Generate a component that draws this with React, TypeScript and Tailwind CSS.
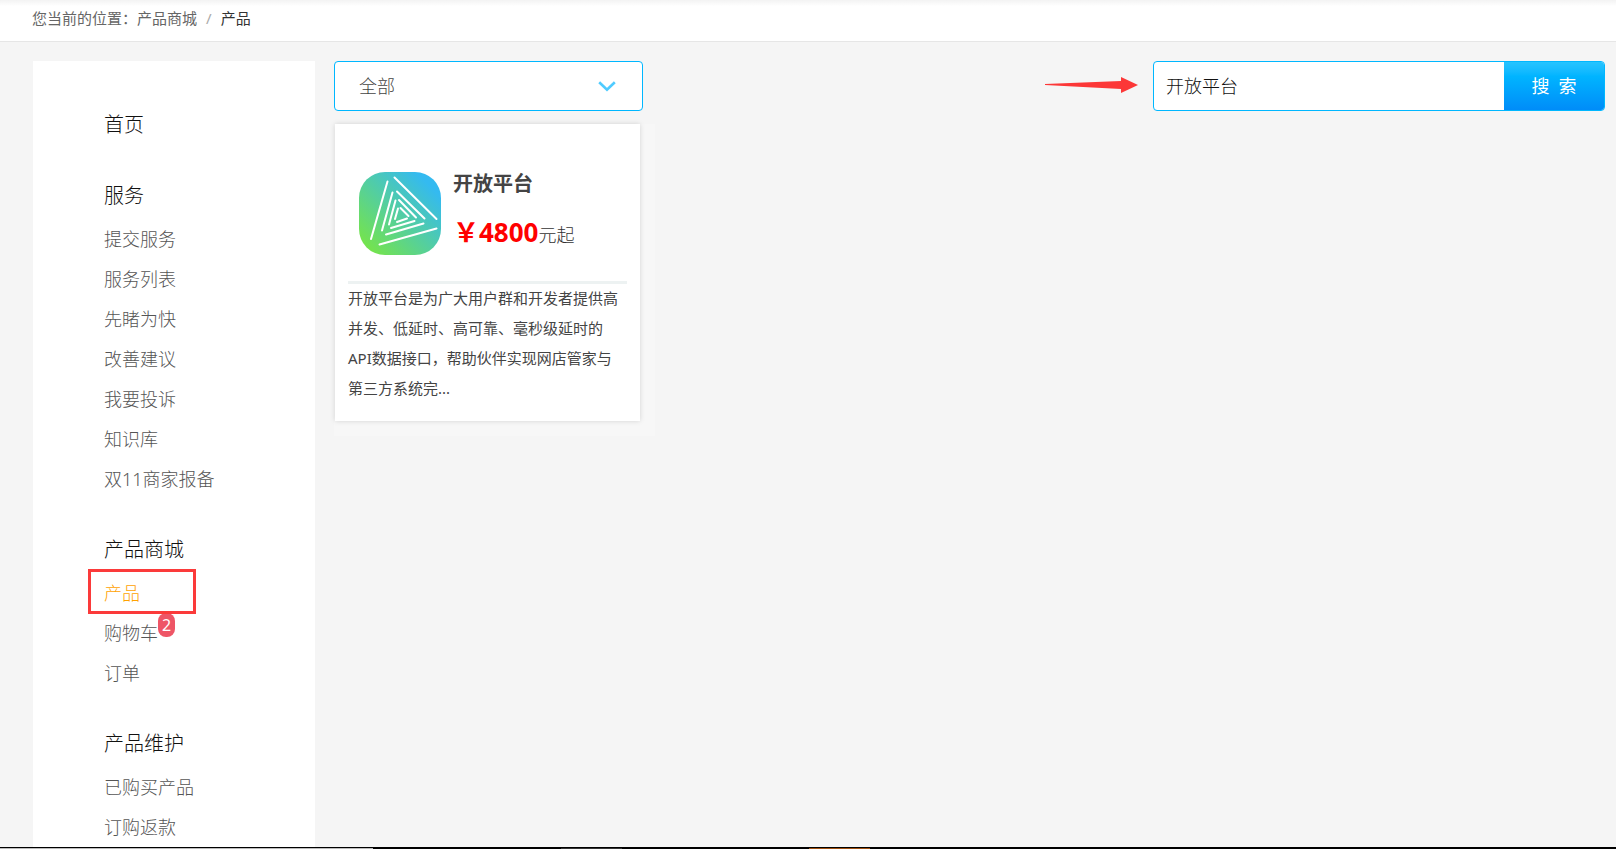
import React from 'react';

interface MenuItem {
  name: string;
  active?: boolean;
  badge?: number;
}

interface MenuGroup {
  title: string;
  items: MenuItem[];
}

const menuData: MenuGroup[] = [
  { title: '首页', items: [] },
  {
    title: '服务',
    items: [
      { name: '提交服务' },
      { name: '服务列表' },
      { name: '先睹为快' },
      { name: '改善建议' },
      { name: '我要投诉' },
      { name: '知识库' },
      { name: '双11商家报备' },
    ],
  },
  {
    title: '产品商城',
    items: [
      { name: '产品', active: true },
      { name: '购物车', badge: 2 },
      { name: '订单' },
    ],
  },
  {
    title: '产品维护',
    items: [{ name: '已购买产品' }, { name: '订购返款' }],
  },
];

const Breadcrumb: React.FC = () => (
  <header className="h-[42px] shrink-0 border-b border-[#e6e6e6] bg-linear-to-b from-[#f3f3f3] to-white to-15% pl-8">
    <nav className="flex h-9 items-center text-[15px] font-normal text-[#666]">
      <span>您当前的位置：</span>
      <a href="#mall">产品商城</a>
      <span className="px-[9px] text-[#aaa]">/</span>
      <a href="#products" className="text-[#333]">产品</a>
    </nav>
  </header>
);

const Sidebar: React.FC = () => (
  <aside className="w-[282px] shrink-0 bg-white pt-11 pl-[71px]">
    {menuData.map(group => (
      <section key={group.title} className="mb-[31px]">
        <h2 className="text-[20px] leading-[40px] text-[#111]">{group.title}</h2>
        {group.items.length > 0 && (
          <ul className="mt-[3px]">
            {group.items.map(item => (
              <li key={item.name} className="relative h-10 text-[18px] leading-[40px] text-[#555]">
                <a href="#menu" className={item.active ? 'text-[#ffa200]' : ''}>{item.name}</a>
                {item.badge && (
                  <span className="absolute top-0 left-[54px] h-6 rounded-lg bg-[#ee5566] px-1 text-[16px] leading-6 font-normal text-white">
                    {item.badge}
                  </span>
                )}
                {item.active && (
                  <span className="absolute -top-1 -left-4 z-10 h-[45px] w-[108px] border-3 border-[#fb3a3a]" />
                )}
              </li>
            ))}
          </ul>
        )}
      </section>
    ))}
  </aside>
);

const CategorySelect: React.FC = () => (
  <div className="relative w-[309px]">
    <select
      aria-label="产品分类"
      className="h-[50px] w-full appearance-none rounded border border-[#00b7ff] bg-white pl-6 text-[18px] text-[#444]"
    >
      <option>全部</option>
    </select>
    <svg className="pointer-events-none absolute top-5 right-[27px]" width="18" height="11" viewBox="0 0 18 11" fill="none">
      <path d="M1.2 1.2 L9 8.8 L16.8 1.2" stroke="#4fcbff" strokeWidth="2.6" />
    </svg>
  </div>
);

const SearchBar: React.FC = () => (
  <form className="flex items-center" onSubmit={e => e.preventDefault()}>
    <svg className="mr-[15px]" width="93" height="18" viewBox="0 0 93 18">
      <path d="M0 7 L76 4 L76 0 L93 8 L76 16 L76 12 L0 8 Z" fill="#fc3737" />
    </svg>
    <div className="flex h-[50px] w-[452px] overflow-hidden rounded border border-[#00b7ff] bg-white">
      <input
        aria-label="搜索产品"
        defaultValue="开放平台"
        className="min-w-0 flex-1 px-3 text-[18px] text-[#111] outline-none"
      />
      <button className="w-[100px] bg-linear-to-b from-[#26c4ff] via-[#00b4ff] via-30% to-[#008cf8] text-[18px] font-normal text-white">
        搜&ensp;索
      </button>
    </div>
  </form>
);

const ProductLogo: React.FC = () => (
  <svg width="82" height="83" viewBox="0 0 82 83" fill="none">
    <defs>
      <linearGradient id="logo" x1="0.1" y1="0.9" x2="0.85" y2="0.15">
        <stop offset="0" stopColor="#74e34e" />
        <stop offset="1" stopColor="#34baf0" />
      </linearGradient>
    </defs>
    <rect width="82" height="83" rx="26" fill="url(#logo)" />
    <g stroke="#fff" strokeWidth="2" strokeLinecap="round">
      <path d="M28.5 9.5 L12 67 M35.5 5.5 L77.5 47 M77.5 56.5 L20.5 72.5" />
      <path d="M33.5 20.5 L23 58.5 M38 19.5 L65.5 46.5 M64.5 51.5 L27 62.5" />
      <path d="M36.5 28.5 L30 52.5 M40 28 L57 45.5 M55.5 49 L32 56" />
      <path d="M39 36.5 L36 47 M41.5 36 L49.5 44 M48 46.5 L38 50" />
    </g>
  </svg>
);

const ProductCard: React.FC = () => (
  <article className="w-[305px] bg-white px-[13px] pb-[18px] shadow-[0_0_5px_rgba(0,0,0,0.15)]">
    <div className="flex h-[157px] gap-3 pl-[11px] pt-12">
      <ProductLogo />
      <div>
        <h3 className="text-[20px] leading-6 font-bold text-[#444]">开放平台</h3>
        <p className="mt-[18px] text-[18px] leading-9 text-[#333]">
          <strong className="text-[26px] font-bold text-[#ff0000]">￥4800</strong>元起
        </p>
      </div>
    </div>
    <hr className="border-t-3 border-[#edf2f2]" />
    <p className="-mt-px pr-2 text-[15px] leading-[30px] font-normal text-[#444]">
      开放平台是为广大用户群和开发者提供高并发、低延时、高可靠、毫秒级延时的API数据接口，帮助伙伴实现网店管家与第三方系统完...
    </p>
  </article>
);

const App: React.FC = () => {
  return (
    <div className="flex h-screen flex-col overflow-hidden bg-[#f5f5f5] font-['Noto_Sans','Noto_Sans_CJK_SC',sans-serif] font-light">
      <Breadcrumb />
      <div className="flex min-h-0 flex-1 gap-[19px] overflow-hidden pt-[19px] pr-[11px] pl-[33px]">
        <Sidebar />
        <main className="flex-1">
          <div className="flex justify-between">
            <CategorySelect />
            <SearchBar />
          </div>
          <div className="mt-[13px] w-[321px] bg-[#f7f7f7] pb-[15px] pl-px">
            <ProductCard />
          </div>
        </main>
      </div>
      {/* top edge of the desktop taskbar */}
      <footer className="h-[2px] shrink-0 border-t border-black bg-black">
        <div className="flex h-px">
          <span className="w-[373px] bg-[#bbb]" />
          <span className="ml-[188px] w-[61px] bg-[#333]" />
          <span className="ml-[187px] w-[61px] bg-[#a05010]" />
        </div>
      </footer>
    </div>
  );
};

export default App;
